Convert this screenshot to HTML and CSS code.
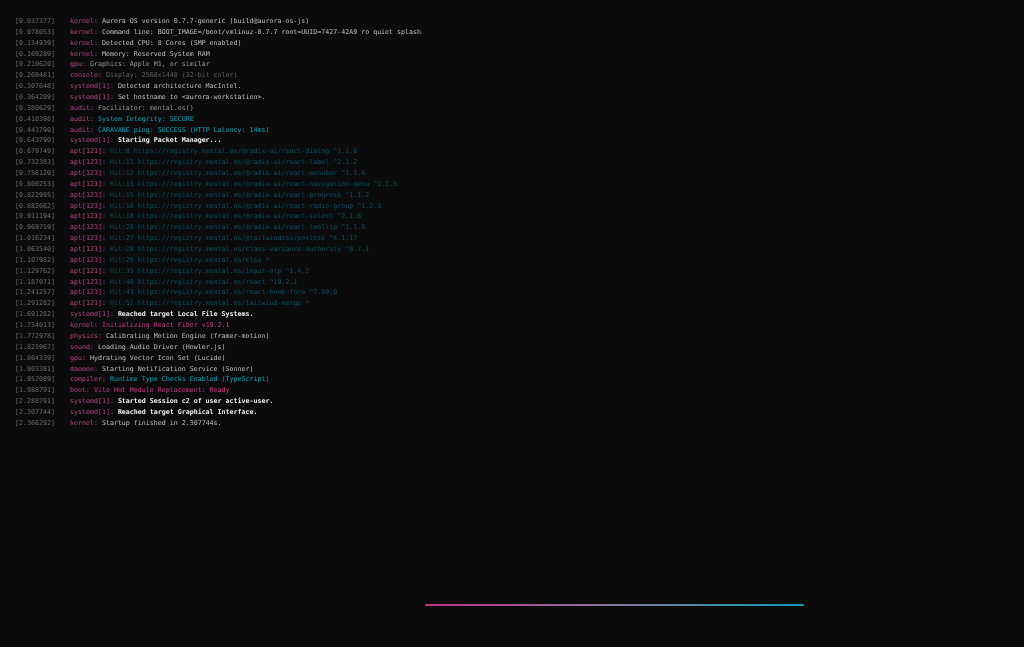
FILE: index.html
```html
<!DOCTYPE html>
<html lang="en">
<head>
<meta charset="utf-8">
<title>Aurora OS boot</title>
<link rel="stylesheet" href="styles.css">
</head>
<body>
<main class="log">
<div class="row"><span class="ts">[0.037377]</span><span class="line"><span class="tag">kernel:</span> <span class="msg">Aurora OS version 0.7.7-generic (build@aurora-os-js)</span></span></div>
<div class="row"><span class="ts">[0.078053]</span><span class="line"><span class="tag">kernel:</span> <span class="msg">Command line: BOOT_IMAGE=/boot/vmlinuz-0.7.7 root=UUID=7427-42A9 ro quiet splash</span></span></div>
<div class="row"><span class="ts">[0.134939]</span><span class="line"><span class="tag">kernel:</span> <span class="msg">Detected CPU: 8 Cores (SMP enabled)</span></span></div>
<div class="row"><span class="ts">[0.169289]</span><span class="line"><span class="tag">kernel:</span> <span class="msg">Memory: Reserved System RAM</span></span></div>
<div class="row"><span class="ts">[0.210620]</span><span class="line"><span class="tag">gpu:</span> <span class="msg-dim">Graphics: Apple M1, or similar</span></span></div>
<div class="row"><span class="ts">[0.269481]</span><span class="line"><span class="tag">console:</span> <span class="msg-faint">Display: 2560x1440 (32-bit color)</span></span></div>
<div class="row"><span class="ts">[0.307648]</span><span class="line"><span class="tag">systemd[1]:</span> <span class="msg">Detected architecture MacIntel.</span></span></div>
<div class="row"><span class="ts">[0.364289]</span><span class="line"><span class="tag">systemd[1]:</span> <span class="msg">Set hostname to &lt;aurora-workstation&gt;.</span></span></div>
<div class="row"><span class="ts">[0.380629]</span><span class="line"><span class="tag">audit:</span> <span class="msg-dim">Facilitator: mental.os()</span></span></div>
<div class="row"><span class="ts">[0.410398]</span><span class="line"><span class="tag">audit:</span> <span class="msg-cyan">System Integrity: SECURE</span></span></div>
<div class="row"><span class="ts">[0.443790]</span><span class="line"><span class="tag">audit:</span> <span class="msg-cyan">CARAVANE ping: SUCCESS (HTTP Latency: 14ms)</span></span></div>
<div class="row"><span class="ts">[0.643790]</span><span class="line"><span class="tag">systemd[1]:</span> <span class="msg-bold">Starting Packet Manager...</span></span></div>
<div class="row"><span class="ts">[0.679749]</span><span class="line"><span class="tag">apt[123]:</span> <span class="msg-hit">Hit:8 https://registry.mental.os/@radix-ui/react-dialog ^1.1.6</span></span></div>
<div class="row"><span class="ts">[0.732383]</span><span class="line"><span class="tag">apt[123]:</span> <span class="msg-hit">Hit:11 https://registry.mental.os/@radix-ui/react-label ^2.1.2</span></span></div>
<div class="row"><span class="ts">[0.756120]</span><span class="line"><span class="tag">apt[123]:</span> <span class="msg-hit">Hit:12 https://registry.mental.os/@radix-ui/react-menubar ^1.1.6</span></span></div>
<div class="row"><span class="ts">[0.800253]</span><span class="line"><span class="tag">apt[123]:</span> <span class="msg-hit">Hit:13 https://registry.mental.os/@radix-ui/react-navigation-menu ^1.2.5</span></span></div>
<div class="row"><span class="ts">[0.822995]</span><span class="line"><span class="tag">apt[123]:</span> <span class="msg-hit">Hit:15 https://registry.mental.os/@radix-ui/react-progress ^1.1.2</span></span></div>
<div class="row"><span class="ts">[0.882662]</span><span class="line"><span class="tag">apt[123]:</span> <span class="msg-hit">Hit:16 https://registry.mental.os/@radix-ui/react-radio-group ^1.2.3</span></span></div>
<div class="row"><span class="ts">[0.911194]</span><span class="line"><span class="tag">apt[123]:</span> <span class="msg-hit">Hit:18 https://registry.mental.os/@radix-ui/react-select ^2.1.6</span></span></div>
<div class="row"><span class="ts">[0.969759]</span><span class="line"><span class="tag">apt[123]:</span> <span class="msg-hit">Hit:26 https://registry.mental.os/@radix-ui/react-tooltip ^1.1.8</span></span></div>
<div class="row"><span class="ts">[1.016234]</span><span class="line"><span class="tag">apt[123]:</span> <span class="msg-hit">Hit:27 https://registry.mental.os/@tailwindcss/postcss ^4.1.17</span></span></div>
<div class="row"><span class="ts">[1.063540]</span><span class="line"><span class="tag">apt[123]:</span> <span class="msg-hit">Hit:28 https://registry.mental.os/class-variance-authority ^0.7.1</span></span></div>
<div class="row"><span class="ts">[1.107982]</span><span class="line"><span class="tag">apt[123]:</span> <span class="msg-hit">Hit:29 https://registry.mental.os/clsx *</span></span></div>
<div class="row"><span class="ts">[1.129762]</span><span class="line"><span class="tag">apt[123]:</span> <span class="msg-hit">Hit:35 https://registry.mental.os/input-otp ^1.4.2</span></span></div>
<div class="row"><span class="ts">[1.187071]</span><span class="line"><span class="tag">apt[123]:</span> <span class="msg-hit">Hit:40 https://registry.mental.os/react ^19.2.1</span></span></div>
<div class="row"><span class="ts">[1.241257]</span><span class="line"><span class="tag">apt[123]:</span> <span class="msg-hit">Hit:43 https://registry.mental.os/react-hook-form ^7.69.0</span></span></div>
<div class="row"><span class="ts">[1.291282]</span><span class="line"><span class="tag">apt[123]:</span> <span class="msg-hit">Hit:51 https://registry.mental.os/tailwind-merge *</span></span></div>
<div class="row"><span class="ts">[1.691282]</span><span class="line"><span class="tag">systemd[1]:</span> <span class="msg-bold">Reached target Local File Systems.</span></span></div>
<div class="row"><span class="ts">[1.734013]</span><span class="line"><span class="tag">kernel:</span> <span class="msg-pink">Initializing React Fiber v19.2.1</span></span></div>
<div class="row"><span class="ts">[1.772978]</span><span class="line"><span class="tag">physics:</span> <span class="msg">Calibrating Motion Engine (framer-motion)</span></span></div>
<div class="row"><span class="ts">[1.825967]</span><span class="line"><span class="tag">sound:</span> <span class="msg">Loading Audio Driver (Howler.js)</span></span></div>
<div class="row"><span class="ts">[1.864339]</span><span class="line"><span class="tag">gpu:</span> <span class="msg">Hydrating Vector Icon Set (Lucide)</span></span></div>
<div class="row"><span class="ts">[1.903381]</span><span class="line"><span class="tag">daemon:</span> <span class="msg">Starting Notification Service (Sonner)</span></span></div>
<div class="row"><span class="ts">[1.957089]</span><span class="line"><span class="tag">compiler:</span> <span class="msg-cyan">Runtime Type Checks Enabled (TypeScript)</span></span></div>
<div class="row"><span class="ts">[1.988791]</span><span class="line"><span class="tag">boot:</span> <span class="msg-pink">Vite Hot Module Replacement: Ready</span></span></div>
<div class="row"><span class="ts">[2.288791]</span><span class="line"><span class="tag">systemd[1]:</span> <span class="msg-bold">Started Session c2 of user active-user.</span></span></div>
<div class="row"><span class="ts">[2.307744]</span><span class="line"><span class="tag">systemd[1]:</span> <span class="msg-bold">Reached target Graphical Interface.</span></span></div>
<div class="row"><span class="ts">[2.366292]</span><span class="line"><span class="tag">kernel:</span> <span class="msg">Startup finished in 2.307744s.</span></span></div>
</main>
<footer class="foot"><div class="bar"></div></footer>
</body>
</html>
```
FILE: styles.css
```css
html, body {
  margin: 0;
  height: 100%;
}
body {
  display: flex;
  flex-direction: column;
  background: #0b0b0b;
  overflow: hidden;
  font-family: "DejaVu Sans Mono", "Liberation Mono", monospace;
  font-size: 6.64px;
  color: #cfcfcf;
  text-rendering: geometricPrecision;
}
.log {
  flex: 1;
  padding: 16px 0 0 15px;
  filter: blur(0.4px);
}
.row {
  display: flex;
  height: 10.865px;
  line-height: 10.865px;
  white-space: pre;
}
.ts {
  width: 55px;
  flex: none;
  color: #6e6e6e;
}
.tag { color: #b84585; }
.msg { color: #c0c0c0; }
.msg-dim { color: #999999; }
.msg-faint { color: #626262; }
.msg-cyan { color: #08a5bd; }
.msg-bold { color: #f4f4f4; font-weight: 700; }
.msg-hit { color: #0d4e5c; }
.msg-pink { color: #cb3d88; }
.foot {
  padding: 0 0 41px 424.5px;
}
.bar {
  width: 379px;
  height: 2px;
  border-radius: 1px;
  background: linear-gradient(90deg, #c42f80, #857a96 50%, #0a9cb5);
  filter: blur(0.3px);
}
```
